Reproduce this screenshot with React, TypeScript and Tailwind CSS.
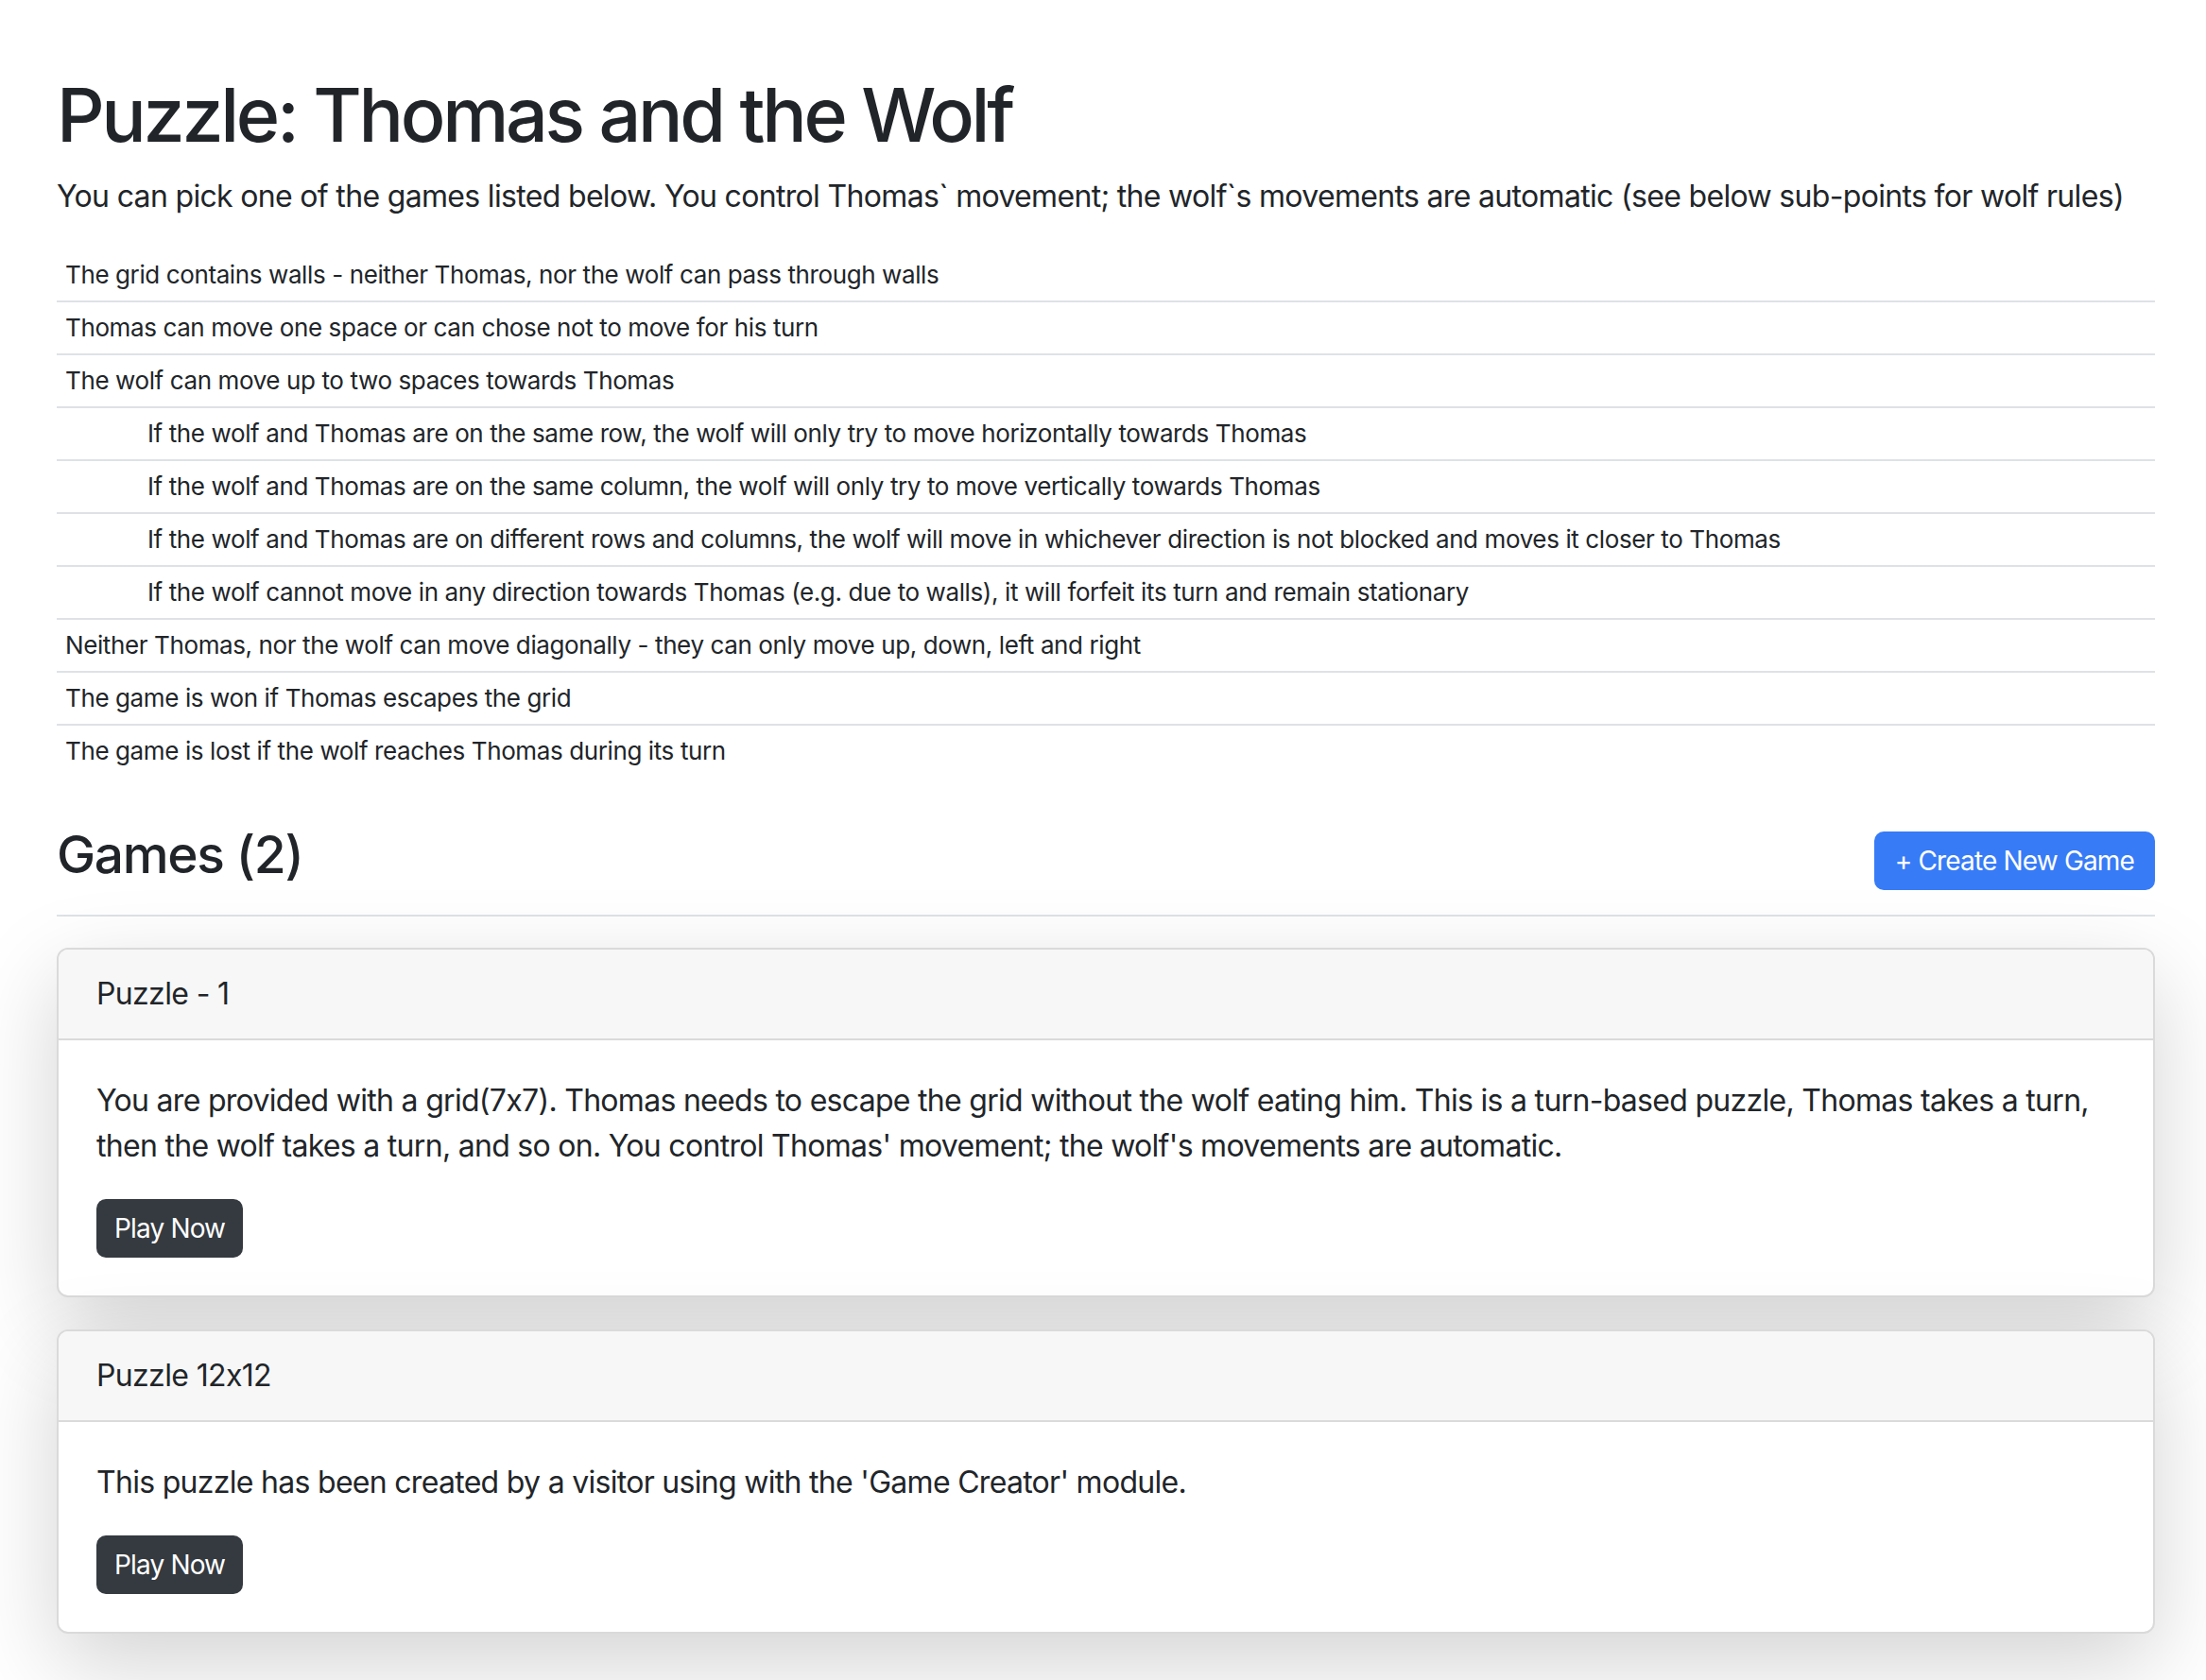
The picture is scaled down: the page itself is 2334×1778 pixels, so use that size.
const rules = [
  { text: "The grid contains walls - neither Thomas, nor the wolf can pass through walls", sub: false },
  { text: "Thomas can move one space or can chose not to move for his turn", sub: false },
  { text: "The wolf can move up to two spaces towards Thomas", sub: false },
  { text: "If the wolf and Thomas are on the same row, the wolf will only try to move horizontally towards Thomas", sub: true },
  { text: "If the wolf and Thomas are on the same column, the wolf will only try to move vertically towards Thomas", sub: true },
  { text: "If the wolf and Thomas are on different rows and columns, the wolf will move in whichever direction is not blocked and moves it closer to Thomas", sub: true },
  { text: "If the wolf cannot move in any direction towards Thomas (e.g. due to walls), it will forfeit its turn and remain stationary", sub: true },
  { text: "Neither Thomas, nor the wolf can move diagonally - they can only move up, down, left and right", sub: false },
  { text: "The game is won if Thomas escapes the grid", sub: false },
  { text: "The game is lost if the wolf reaches Thomas during its turn", sub: false },
];

const games = [
  {
    title: "Puzzle - 1",
    description:
      "You are provided with a grid(7x7). Thomas needs to escape the grid without the wolf eating him. This is a turn-based puzzle, Thomas takes a turn, then the wolf takes a turn, and so on. You control Thomas' movement; the wolf's movements are automatic.",
  },
  {
    title: "Puzzle 12x12",
    description: "This puzzle has been created by a visitor using with the 'Game Creator' module.",
  },
];

function GameCard({ title, description }: { title: string; description: string }) {
  return (
    <div className="overflow-hidden rounded-[12px] border-2 border-[#dadada] bg-white shadow-[0_32px_96px_rgba(0,0,0,0.175)]">
      <div className="border-b-2 border-[#dadada] bg-[#f7f7f7] px-[40px] py-[23px] text-[32px] leading-[48px] tracking-[-0.02em]">
        {title}
      </div>
      <div className="p-[40px]">
        <p className="mb-[32px] text-[32px] leading-[48px] tracking-[-0.022em]">{description}</p>
        <button className="rounded-[10px] bg-[#343a40] px-[19px] py-[10px] text-[28px] leading-[42px] tracking-[-0.03em] text-white">
          Play Now
        </button>
      </div>
    </div>
  );
}

export default function App() {
  return (
    <div className="min-h-screen bg-white font-['Inter','Liberation_Sans',sans-serif] text-[#212529] [font-feature-settings:'calt'_0]">
      <main className="pb-[56px] pl-[60px] pr-[54px] pt-[74px]">
        <h1 className="mb-[15px] text-[79px] font-medium leading-[95px] tracking-[-0.042em]">
          Puzzle: Thomas and the Wolf
        </h1>
        <p className="mb-[32px] text-[32px] leading-[48px] tracking-[-0.021em]">
          You can pick one of the games listed below. You control Thomas` movement; the wolf`s movements are
          automatic (see below sub-points for wolf rules)
        </p>

        <ul>
          {rules.map((rule, i) => (
            <li
              key={i}
              className={
                "py-[8px] text-[26px] leading-[38px] tracking-[-0.015em] " +
                (i < rules.length - 1 ? "border-b-2 border-[#dee2e6] " : "border-b-2 border-transparent ") +
                (rule.sub ? "pl-[96px]" : "pl-[9px]")
              }
            >
              {rule.text}
            </li>
          ))}
        </ul>

        <div className="mt-[47px] flex items-start justify-between border-b-2 border-[#dee2e6] pb-[26px]">
          <h3 className="text-[55px] font-medium leading-[66px] tracking-[-0.024em]">Games (2)</h3>
          <button className="mt-[9px] rounded-[10px] bg-[#377bf6] px-[22px] py-[10px] text-[28px] leading-[42px] tracking-[-0.03em] text-white">
            + Create New Game
          </button>
        </div>

        <div className="mt-[33px] flex flex-col gap-[34px]">
          {games.map((g) => (
            <GameCard key={g.title} title={g.title} description={g.description} />
          ))}
        </div>
      </main>
    </div>
  );
}
